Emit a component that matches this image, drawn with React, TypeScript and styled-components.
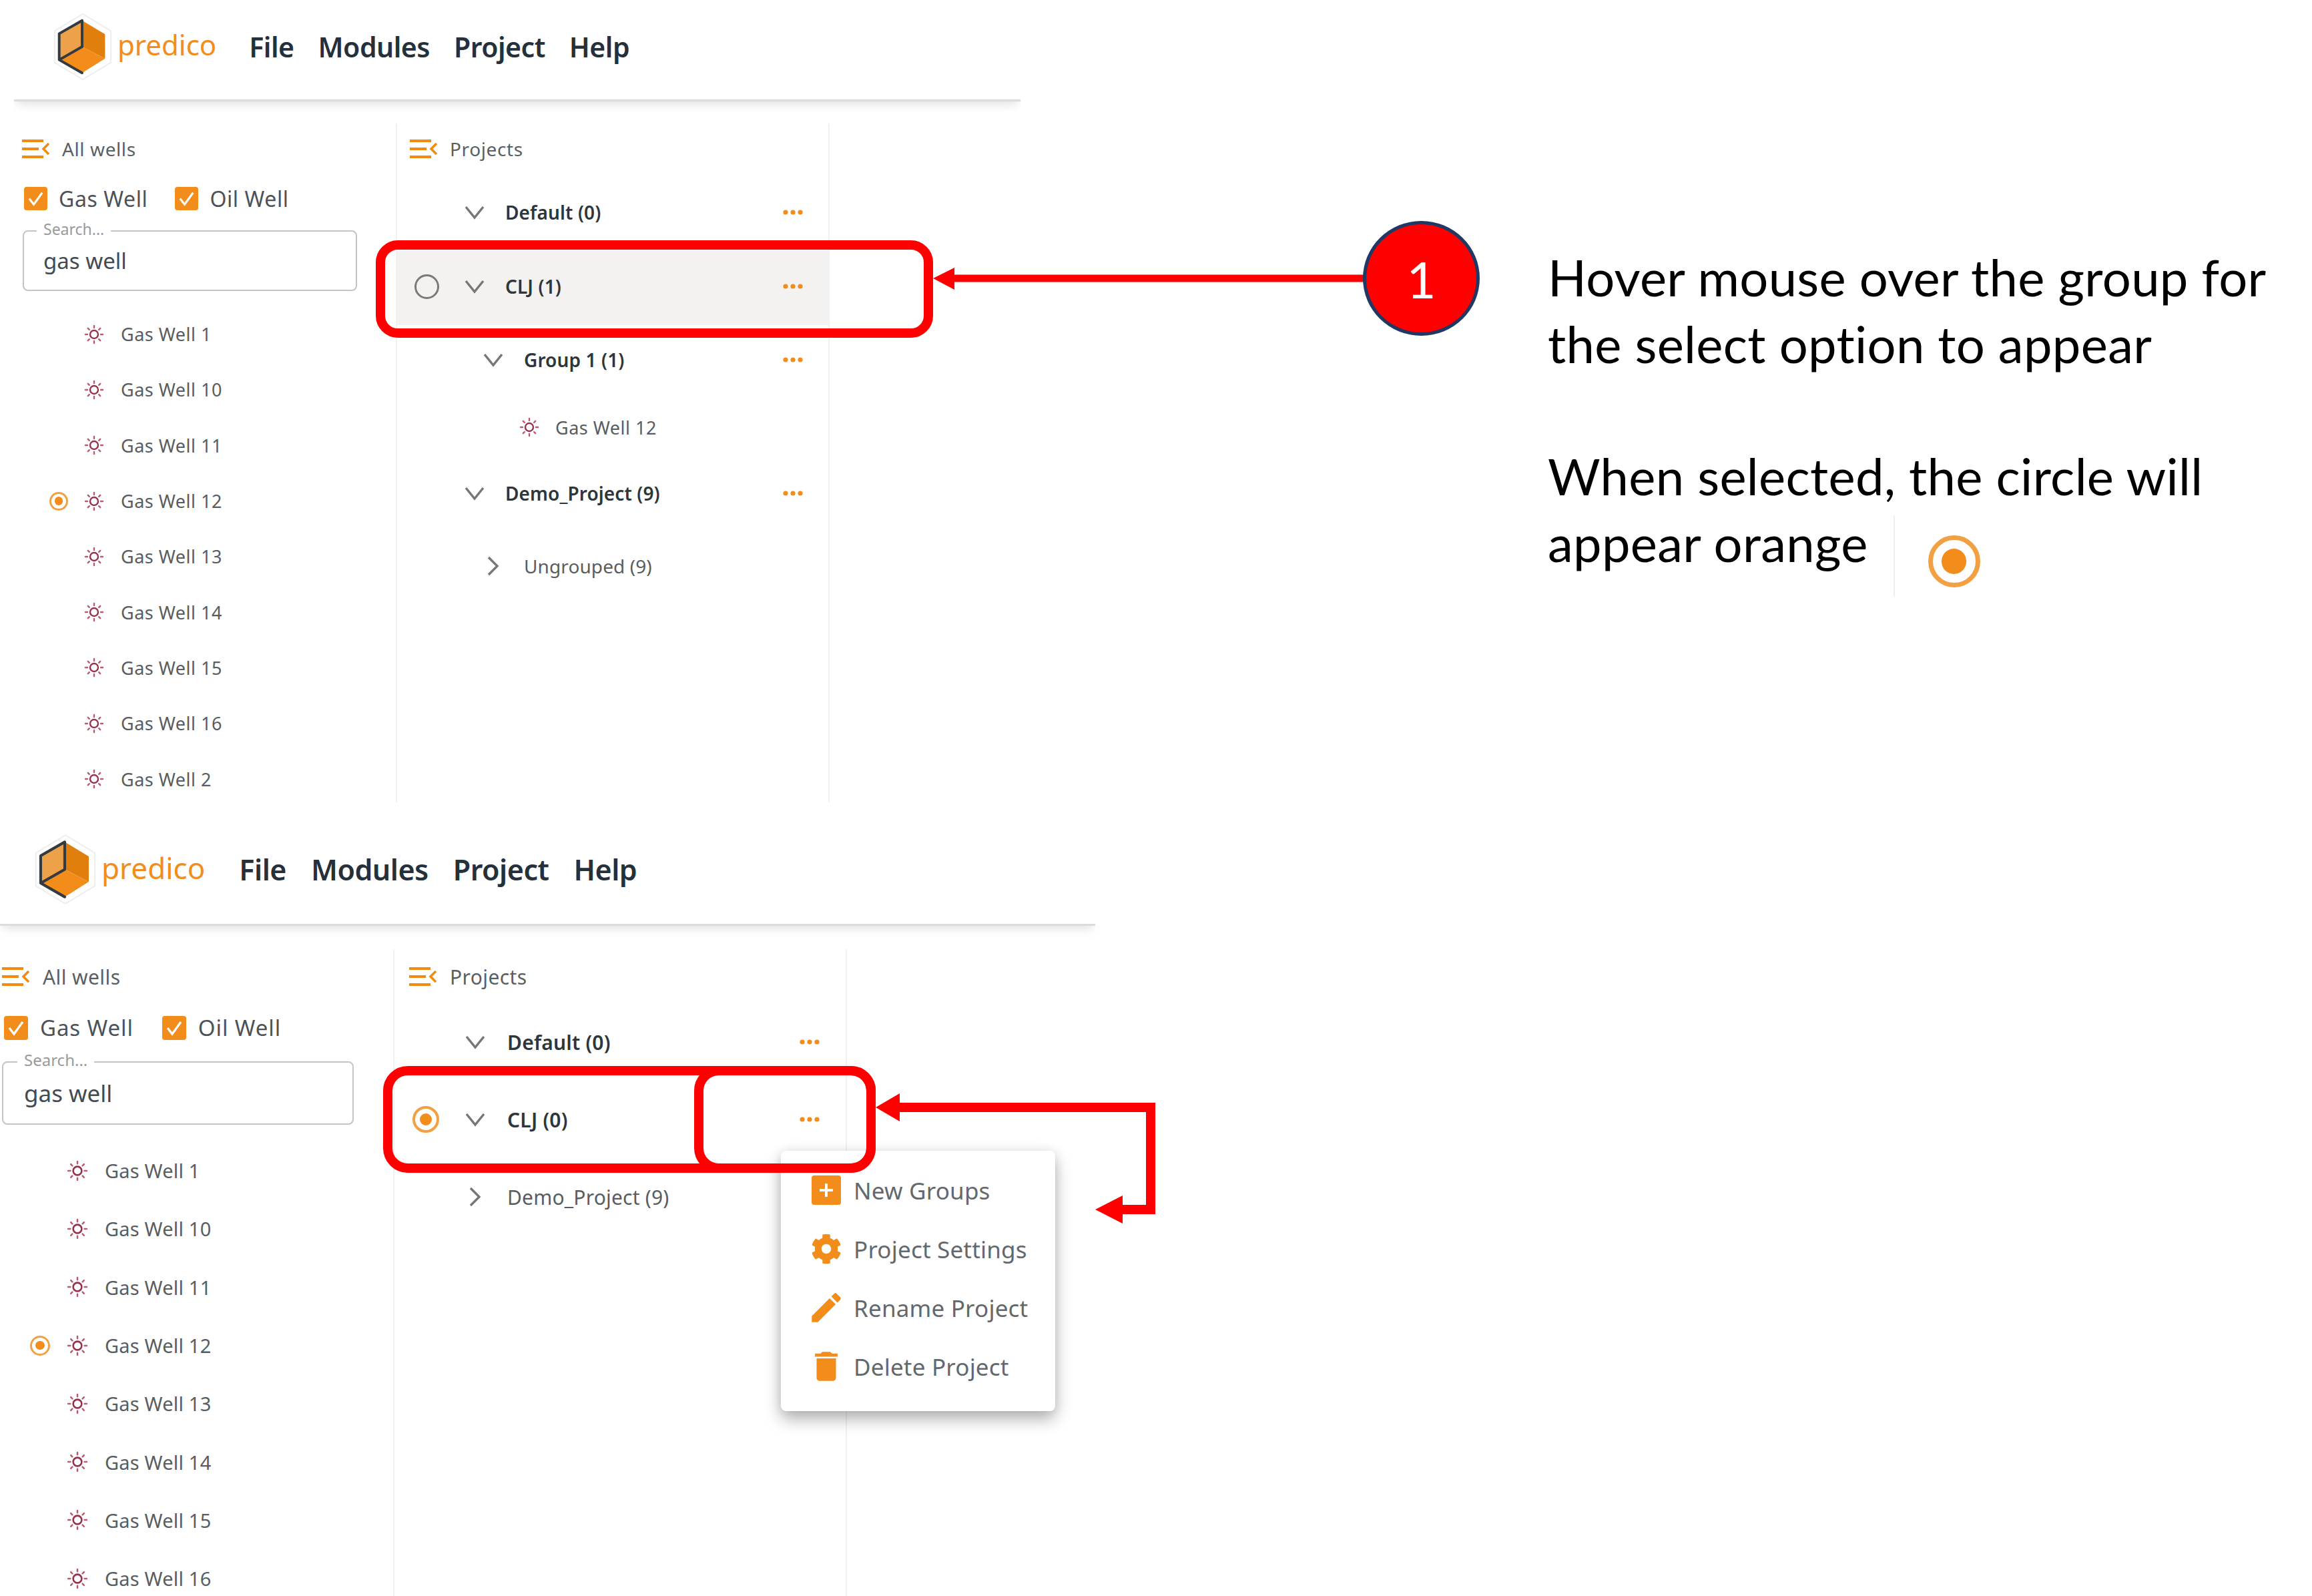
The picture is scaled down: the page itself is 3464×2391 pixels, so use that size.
import React from "react";
import styled, { createGlobalStyle } from "styled-components";
import { FaCog } from "react-icons/fa";
import { MdDelete, MdEdit } from "react-icons/md";

const ORANGE = "#f28d1c";
const UI_FONT = `"Noto Sans", "Open Sans", sans-serif`;

type Metrics = {
  width: number; height: number; left: number; headH: number; headPadB: number; logoPad: number; logoW: number; logoH: number;
  brandGap: number; brandSize: number; menuGap: number; menuMl: number; menuSize: number;
  bodyPad: number; wellsW: number; projectsW: number; panelH: number; panelSize: number; panelSpacing: number; iconW: number; iconH: number;
  wellsHeadPad: number; wellsHeadGap: number; projHeadPad: number; projHeadGap: number;
  checksH: number; checksPad: number; checkSize: number; checkGap: number; checkSpacing: number; checkFont: number; checkTrack: number;
  searchMl: number; searchMt: number; searchW: number; searchH: number; searchPad: number; legendSize: number; valueSize: number;
  listMt: number; wellH: number; wellPad: number; radio: number; radioGap: number; sun: number; sunGap: number; wellFont: number; wellTrack: number;
  rowPad: number; bigRadio: number; chevGap: number; textGap: number; rowFont: number; rowTrack: number; dotsPad: number; rowH: number;
};

const topM: Metrics = {
  width: 1508, height: 1202, left: 21, headH: 152, headPadB: 10, logoPad: 59, logoW: 88, logoH: 102,
  brandGap: 8, brandSize: 42, menuGap: 36, menuMl: 49, menuSize: 41,
  bodyPad: 33, wellsW: 572, projectsW: 650, panelH: 76, panelSize: 28, panelSpacing: 0.6, iconW: 42, iconH: 30,
  wellsHeadPad: 12, wellsHeadGap: 18, projHeadPad: 19, projHeadGap: 18,
  checksH: 72, checksPad: 15, checkSize: 35, checkGap: 17, checkSpacing: 41, checkFont: 32, checkTrack: 0.6,
  searchMl: 13, searchMt: 12, searchW: 501, searchH: 91, searchPad: 29, legendSize: 23, valueSize: 33,
  listMt: 23, wellH: 83.3, wellPad: 53, radio: 28, radioGap: 24, sun: 30, sunGap: 25, wellFont: 27, wellTrack: 0.5,
  rowPad: 26, bigRadio: 37, chevGap: 38, textGap: 31, rowFont: 28, rowTrack: 0.1, dotsPad: 36, rowH: 112,
};

const bottomM: Metrics = {
  width: 1641, height: 1161, left: 0, headH: 157, headPadB: 9, logoPad: 51, logoW: 94, logoH: 107,
  brandGap: 7, brandSize: 44, menuGap: 37, menuMl: 51, menuSize: 43,
  bodyPad: 36, wellsW: 589, projectsW: 680, panelH: 80, panelSize: 30, panelSpacing: 0.4, iconW: 44, iconH: 30,
  wellsHeadPad: 2, wellsHeadGap: 18, projHeadPad: 21, projHeadGap: 18,
  checksH: 73, checksPad: 6, checkSize: 36, checkGap: 18, checkSpacing: 43, checkFont: 33, checkTrack: 0.9,
  searchMl: 3, searchMt: 14, searchW: 527, searchH: 95, searchPad: 31, legendSize: 24, valueSize: 35,
  listMt: 25, wellH: 87.3, wellPad: 45, radio: 30, radioGap: 25, sun: 32, sunGap: 25, wellFont: 29, wellTrack: 0.2,
  rowPad: 27, bigRadio: 40, chevGap: 39, textGap: 33, rowFont: 30, rowTrack: 0.2, dotsPad: 37, rowH: 116,
};

const Global = createGlobalStyle`
  html, body { margin: 0; padding: 0; background: #fff; }
  * { box-sizing: border-box; }
`;

const Page = styled.div`
  position: relative;
  width: 3464px;
  height: 2391px;
  overflow: hidden;
  background: #fff;
  font-family: ${UI_FONT};
`;

const TopRow = styled.div`
  display: flex;
  height: 1230px;
`;

const Shot = styled.section<{ $m: Metrics }>`
  flex: none;
  width: ${(p) => p.$m.width}px;
  height: ${(p) => p.$m.height}px;
  margin-left: ${(p) => p.$m.left}px;
  overflow: hidden;
`;

const AppHeader = styled.header<{ $m: Metrics }>`
  display: flex;
  align-items: center;
  height: ${(p) => p.$m.headH}px;
  padding: 0 0 ${(p) => p.$m.headPadB}px ${(p) => p.$m.logoPad}px;
  border-bottom: 3px solid #dcdcdc;
  box-shadow: 0 8px 14px -4px rgba(0, 0, 0, 0.12);
`;

const Logo = styled.svg<{ $m: Metrics }>`
  flex: none;
  width: ${(p) => p.$m.logoW}px;
  height: ${(p) => p.$m.logoH}px;
`;

const Brand = styled.span<{ $m: Metrics }>`
  margin-left: ${(p) => p.$m.brandGap}px;
  margin-bottom: 6px;
  font-size: ${(p) => p.$m.brandSize}px;
  color: ${ORANGE};
`;

const Menu = styled.nav<{ $m: Metrics }>`
  display: flex;
  gap: ${(p) => p.$m.menuGap}px;
  margin-left: ${(p) => p.$m.menuMl}px;
  font-size: ${(p) => p.$m.menuSize}px;
  font-weight: 600;
  letter-spacing: -0.5px;
  color: #25303a;
`;

const Body = styled.div<{ $m: Metrics }>`
  display: flex;
  height: ${(p) => p.$m.height - p.$m.headH}px;
  padding-top: ${(p) => p.$m.bodyPad}px;
`;

const WellsColumn = styled.div<{ $m: Metrics }>`
  flex: none;
  width: ${(p) => p.$m.wellsW}px;
  overflow: hidden;
`;

const ProjectsColumn = styled.div<{ $m: Metrics }>`
  flex: none;
  width: ${(p) => p.$m.projectsW}px;
  border-left: 2px solid #f1f1f1;
  border-right: 2px solid #f1f1f1;
`;

const PanelHead = styled.div<{ $m: Metrics; $pad: number; $gap: number }>`
  display: flex;
  align-items: center;
  gap: ${(p) => p.$gap}px;
  height: ${(p) => p.$m.panelH}px;
  padding-left: ${(p) => p.$pad}px;
  font-size: ${(p) => p.$m.panelSize}px;
  letter-spacing: ${(p) => p.$m.panelSpacing}px;
  color: #5a5f64;
`;

const ChecksRow = styled.div<{ $m: Metrics }>`
  display: flex;
  align-items: center;
  gap: ${(p) => p.$m.checkSpacing}px;
  height: ${(p) => p.$m.checksH}px;
  padding-left: ${(p) => p.$m.checksPad}px;
  font-size: ${(p) => p.$m.checkFont}px;
  letter-spacing: ${(p) => p.$m.checkTrack}px;
  color: #4c5258;
`;

const CheckItem = styled.label<{ $gap: number }>`
  display: flex;
  align-items: center;
  gap: ${(p) => p.$gap}px;
`;

const CheckBox = styled.svg<{ $size: number }>`
  flex: none;
  width: ${(p) => p.$size}px;
  height: ${(p) => p.$size}px;
`;

const SearchField = styled.div<{ $m: Metrics }>`
  position: relative;
  width: ${(p) => p.$m.searchW}px;
  height: ${(p) => p.$m.searchH}px;
  margin: ${(p) => p.$m.searchMt}px 0 0 ${(p) => p.$m.searchMl}px;
  padding-left: ${(p) => p.$m.searchPad}px;
  display: flex;
  align-items: center;
  border: 2px solid #c4c4c4;
  border-radius: 8px;
  font-size: ${(p) => p.$m.valueSize}px;
  color: #444a50;
`;

const SearchLegend = styled.span<{ $m: Metrics }>`
  position: absolute;
  top: -19px;
  left: ${(p) => p.$m.searchPad - 10}px;
  padding: 0 10px;
  background: #fff;
  font-size: ${(p) => p.$m.legendSize}px;
  line-height: 30px;
  color: #9a9a9a;
`;

const WellList = styled.div<{ $m: Metrics }>`
  margin-top: ${(p) => p.$m.listMt}px;
`;

const WellRow = styled.div<{ $m: Metrics }>`
  display: flex;
  align-items: center;
  height: ${(p) => p.$m.wellH}px;
  padding-left: ${(p) => p.$m.wellPad}px;
  font-size: ${(p) => p.$m.wellFont}px;
  letter-spacing: ${(p) => p.$m.wellTrack}px;
  color: #585d62;
`;

const RadioSlot = styled.span<{ $size: number; $gap: number }>`
  flex: none;
  display: flex;
  width: ${(p) => p.$size}px;
  height: ${(p) => p.$size}px;
  margin-right: ${(p) => p.$gap}px;
`;

const Radio = styled.span<{ $on?: boolean; $size: number }>`
  display: flex;
  align-items: center;
  justify-content: center;
  flex: none;
  width: ${(p) => p.$size}px;
  height: ${(p) => p.$size}px;
  border-radius: 50%;
  border: ${(p) => Math.max(2, Math.round(p.$size * 0.09))}px solid ${(p) => (p.$on ? "#f3a043" : "#7a7a7a")};
  &::after {
    content: "";
    display: ${(p) => (p.$on ? "block" : "none")};
    width: 58%;
    height: 58%;
    border-radius: 50%;
    background: ${ORANGE};
  }
`;

const SunIcon = styled.svg<{ $size: number; $gap: number }>`
  flex: none;
  width: ${(p) => p.$size}px;
  height: ${(p) => p.$size}px;
  margin-right: ${(p) => p.$gap}px;
`;

const ProjectRow = styled.div<{ $m: Metrics; $hover?: boolean; $indent?: number; $h?: number; $strong?: boolean }>`
  position: relative;
  display: flex;
  align-items: center;
  height: ${(p) => p.$h ?? p.$m.rowH}px;
  padding: 0 ${(p) => p.$m.dotsPad}px ${(p) => (p.$hover ? 4 : 0)}px ${(p) => p.$m.rowPad + (p.$indent ?? 0)}px;
  background: ${(p) => (p.$hover ? "#f3f2f0" : "transparent")};
  font-size: ${(p) => p.$m.rowFont}px;
  letter-spacing: ${(p) => p.$m.rowTrack}px;
  font-weight: ${(p) => (p.$strong ? 600 : 400)};
  color: ${(p) => (p.$strong ? "#2e353b" : "#585d62")};
`;

const Chevron = styled.svg<{ $gap: number }>`
  flex: none;
  width: 30px;
  height: 30px;
  margin-right: ${(p) => p.$gap}px;
`;

const RowLabel = styled.span`
  flex: 1;
`;

const DotsIcon = styled.svg`
  flex: none;
  width: 34px;
  height: 10px;
`;

const ProjectWell = styled.div<{ $m: Metrics }>`
  display: flex;
  align-items: center;
  height: 98px;
  padding-left: 183px;
  font-size: ${(p) => p.$m.wellFont}px;
  letter-spacing: ${(p) => p.$m.wellTrack}px;
  color: #585d62;
`;

const PopMenu = styled.div`
  position: absolute;
  top: 105px;
  left: 579px;
  z-index: 2;
  width: 411px;
  height: 390px;
  padding: 15px 0 0 46px;
  background: #fff;
  border-radius: 8px;
  letter-spacing: 0.2px;
  box-shadow: 0 12px 24px rgba(0, 0, 0, 0.3), 0 0 16px rgba(0, 0, 0, 0.08);
`;

const PopItem = styled.div`
  display: flex;
  align-items: center;
  gap: 19px;
  height: 88px;
  font-size: 35px;
  font-weight: 400;
  color: #63686d;
`;

const PopIcon = styled.span`
  flex: none;
  display: flex;
  align-items: center;
  justify-content: center;
  width: 44px;
  height: 50px;
  color: ${ORANGE};
  svg {
    flex: none;
  }
`;

const Notes = styled.aside`
  flex: none;
  margin-left: 790px;
  padding-top: 365px;
  font-family: Lato, "Liberation Sans", sans-serif;
  font-size: 76px;
  letter-spacing: 0.3px;
  line-height: 100px;
  color: #000;
`;

const NoteGap = styled.div`
  height: 98px;
`;

const NoteLine = styled.div`
  display: flex;
  align-items: center;
  height: 100px;
  white-space: nowrap;
`;

const NoteRule = styled.span`
  flex: none;
  width: 2px;
  height: 122px;
  margin: 40px 50px 0 38px;
  background: #efefef;
`;

const NoteRadio = styled(Radio)`
  margin-top: 56px;
`;

const Overlay = styled.svg`
  position: absolute;
  inset: 0;
  z-index: 5;
  width: 3464px;
  height: 2391px;
  pointer-events: none;
`;

const Badge = styled.div`
  position: absolute;
  top: 331px;
  left: 2042px;
  z-index: 6;
  display: flex;
  align-items: center;
  justify-content: center;
  width: 175px;
  height: 172px;
  border: 5px solid #1f3864;
  border-radius: 50%;
  background: #ff0000;
  font-family: Lato, "Liberation Sans", sans-serif;
  font-size: 76px;
  color: #fff;
`;

const PanelIcon = ({ w, h }: { w: number; h: number }) => (
  <svg width={w} height={h} viewBox="0 0 42 30" fill="none" stroke="#f28a12" strokeWidth="4">
    <path d="M0 3H32M0 15H25M0 27H32" />
    <path d="M40 7 L32 15 L40 23" strokeWidth="3.5" />
  </svg>
);

const LogoMark = ({ m }: { m: Metrics }) => (
  <Logo $m={m} viewBox="0 0 88 104">
    <polygon points="44,2 87,28 87,76 44,102 1,76 1,28" fill="#fff" stroke="#eeeeee" strokeWidth="2" strokeLinejoin="round" />
    <polygon points="43,12 8,32 8,72 43,52" fill="#eda24a" />
    <polygon points="43,12 78,33 78,70 43,52" fill="#e07f0c" />
    <polygon points="43,52 78,70 43,92 8,72" fill="#f28d1c" />
    <path d="M43 52 V12 L8 32 V72 L43 92 M8 72 L43 52" fill="none" stroke="#333b40" strokeWidth="4" strokeLinejoin="round" strokeLinecap="round" />
  </Logo>
);

const Sun = ({ size, gap }: { size: number; gap: number }) => (
  <SunIcon $size={size} $gap={gap} viewBox="0 0 30 30" fill="none">
    <circle cx="15" cy="15" r="6" stroke="#97324a" strokeWidth="2.4" />
    <path
      d="M15 2V5M15 25V28M2 15H5M25 15H28M5.8 5.8L7.8 7.8M22.2 22.2L24.2 24.2M5.8 24.2L7.8 22.2M22.2 7.8L24.2 5.8"
      stroke="#bb5b72"
      strokeWidth="2.4"
      strokeLinecap="round"
    />
  </SunIcon>
);

const Check = ({ size }: { size: number }) => (
  <CheckBox $size={size} viewBox="0 0 36 36">
    <rect width="36" height="36" rx="4" fill={ORANGE} />
    <path d="M8 18L15 27L28 9" fill="none" stroke="#fff" strokeWidth="3.2" />
  </CheckBox>
);

const ChevronIcon = ({ open, gap }: { open: boolean; gap: number }) => (
  <Chevron $gap={gap} viewBox="0 0 30 30" fill="none" stroke="#767676" strokeWidth="3.4">
    <path d={open ? "M2 7L15 23L28 7" : "M8 2L21 15L8 28"} />
  </Chevron>
);

const Dots = () => (
  <DotsIcon viewBox="0 0 34 10" fill={ORANGE}>
    <circle cx="6" cy="5" r="3.6" />
    <circle cx="17" cy="5" r="3.6" />
    <circle cx="28" cy="5" r="3.6" />
  </DotsIcon>
);

const Row = ({
  m, label, open = true, indent = 0, hover, radio, dots = true, strong = true, children, h,
}: {
  m: Metrics; label: string; open?: boolean; indent?: number; hover?: boolean; radio?: "on" | "off"; dots?: boolean; strong?: boolean; children?: React.ReactNode; h?: number;
}) => (
  <ProjectRow $m={m} $hover={hover} $indent={indent} $strong={strong} $h={h}>
    <RadioSlot $size={m.bigRadio} $gap={m.chevGap}>
      {radio && <Radio $size={m.bigRadio} $on={radio === "on"} />}
    </RadioSlot>
    <ChevronIcon open={open} gap={m.textGap} />
    <RowLabel>{label}</RowLabel>
    {dots && <Dots />}
    {children}
  </ProjectRow>
);

const WellsPanel = ({ m, wells }: { m: Metrics; wells: string[] }) => (
  <WellsColumn $m={m}>
    <PanelHead $m={m} $pad={m.wellsHeadPad} $gap={m.wellsHeadGap}>
      <PanelIcon w={m.iconW} h={m.iconH} />
      All wells
    </PanelHead>
    <ChecksRow $m={m}>
      <CheckItem $gap={m.checkGap}><Check size={m.checkSize} />Gas Well</CheckItem>
      <CheckItem $gap={m.checkGap}><Check size={m.checkSize} />Oil Well</CheckItem>
    </ChecksRow>
    <SearchField $m={m}>
      <SearchLegend $m={m}>Search...</SearchLegend>
      gas well
    </SearchField>
    <WellList $m={m}>
      {wells.map((w) => (
        <WellRow key={w} $m={m}>
          <RadioSlot $size={m.radio} $gap={m.radioGap}>
            {w === "Gas Well 12" && <Radio $size={m.radio} $on />}
          </RadioSlot>
          <Sun size={m.sun} gap={m.sunGap} />
          {w}
        </WellRow>
      ))}
    </WellList>
  </WellsColumn>
);

const AppBar = ({ m }: { m: Metrics }) => (
  <AppHeader $m={m}>
    <LogoMark m={m} />
    <Brand $m={m}>predico</Brand>
    <Menu $m={m}>
      <span>File</span>
      <span>Modules</span>
      <span>Project</span>
      <span>Help</span>
    </Menu>
  </AppHeader>
);

const topWells = ["Gas Well 1", "Gas Well 10", "Gas Well 11", "Gas Well 12", "Gas Well 13", "Gas Well 14", "Gas Well 15", "Gas Well 16", "Gas Well 2"];
const bottomWells = topWells.slice(0, 8);

export default function App() {
  return (
    <Page>
      <Global />
      <TopRow>
        <Shot $m={topM}>
          <AppBar m={topM} />
          <Body $m={topM}>
            <WellsPanel m={topM} wells={topWells} />
            <ProjectsColumn $m={topM}>
              <PanelHead $m={topM} $pad={topM.projHeadPad} $gap={topM.projHeadGap}>
                <PanelIcon w={topM.iconW} h={topM.iconH} />
                Projects
              </PanelHead>
              <Row m={topM} label="Default (0)" h={114} />
              <Row m={topM} label="CLJ (1)" hover radio="off" />
              <Row m={topM} label="Group 1 (1)" indent={28} h={104} />
              <ProjectWell $m={topM}>
                <Sun size={topM.sun} gap={24} />
                Gas Well 12
              </ProjectWell>
              <Row m={topM} label="Demo_Project (9)" h={100} />
              <Row m={topM} label="Ungrouped (9)" indent={28} open={false} dots={false} strong={false} h={118} />
            </ProjectsColumn>
          </Body>
        </Shot>
        <Notes>
          <div>Hover mouse over the group for</div>
          <div>the select option to appear</div>
          <NoteGap />
          <div>When selected, the circle will</div>
          <NoteLine>
            appear orange
            <NoteRule />
            <NoteRadio $size={78} $on />
          </NoteLine>
        </Notes>
      </TopRow>
      <Shot $m={bottomM}>
        <AppBar m={bottomM} />
        <Body $m={bottomM}>
          <WellsPanel m={bottomM} wells={bottomWells} />
          <ProjectsColumn $m={bottomM}>
            <PanelHead $m={bottomM} $pad={bottomM.projHeadPad} $gap={bottomM.projHeadGap}>
              <PanelIcon w={bottomM.iconW} h={bottomM.iconH} />
              Projects
            </PanelHead>
            <Row m={bottomM} label="Default (0)" />
            <Row m={bottomM} label="CLJ (0)" radio="on">
              <PopMenu>
                <PopItem>
                  <PopIcon>
                    <svg width="44" height="44" viewBox="0 0 44 44">
                      <rect width="44" height="44" rx="4" fill={ORANGE} />
                      <path d="M22 12V32M12 22H32" stroke="#fff" strokeWidth="4" />
                    </svg>
                  </PopIcon>
                  New Groups
                </PopItem>
                <PopItem>
                  <PopIcon><FaCog size={46} /></PopIcon>
                  Project Settings
                </PopItem>
                <PopItem>
                  <PopIcon><MdEdit size={58} /></PopIcon>
                  Rename Project
                </PopItem>
                <PopItem>
                  <PopIcon><MdDelete size={58} /></PopIcon>
                  Delete Project
                </PopItem>
              </PopMenu>
            </Row>
            <Row m={bottomM} label="Demo_Project (9)" open={false} dots={false} strong={false} />
          </ProjectsColumn>
        </Body>
      </Shot>
      <Overlay viewBox="0 0 3464 2391" fill="none">
        <rect x="570" y="367" width="821" height="132" rx="26" stroke="#ff0000" strokeWidth="14" />
        <path d="M1428 417H2050" stroke="#ff0000" strokeWidth="11" />
        <polygon points="1398,417 1430,401 1430,434" fill="#ff0000" />
        <rect x="581" y="1604" width="724" height="146" rx="30" stroke="#ff0000" strokeWidth="14" />
        <rect x="1047" y="1604" width="258" height="146" rx="30" stroke="#ff0000" strokeWidth="14" />
        <path d="M1346 1659H1724V1812H1680" stroke="#ff0000" strokeWidth="14" />
        <polygon points="1312,1659 1348,1638 1348,1680" fill="#ff0000" />
        <polygon points="1641,1812 1682,1791 1682,1833" fill="#ff0000" />
      </Overlay>
      <Badge>1</Badge>
    </Page>
  );
}
